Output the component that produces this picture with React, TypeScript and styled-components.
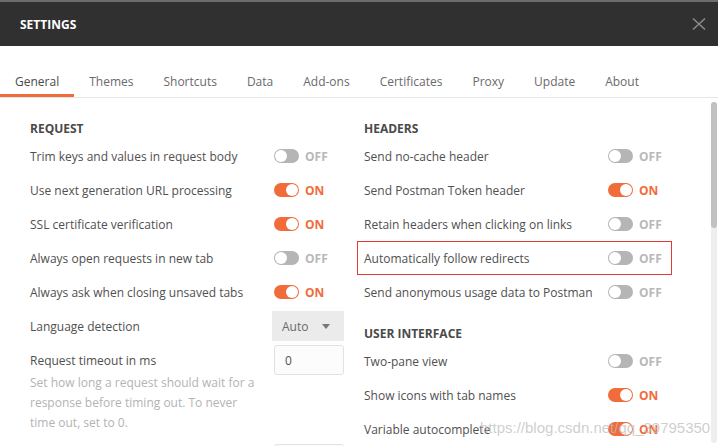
import styled, { createGlobalStyle } from "styled-components";

const GlobalStyle = createGlobalStyle`
  html, body {
    margin: 0;
    padding: 0;
    background: #ffffff;
  }

  body {
    font-family: "Open Sans", "Liberation Sans", sans-serif;
    color: #505050;
  }
`;

const Window = styled.div`
  height: 100vh;
  overflow: hidden;
  position: relative;
  background: #ffffff;
`;

const Header = styled.header`
  height: 44px;
  border-top: 2px solid #6c6c6c;
  background-color: #303030;
  padding: 0 12px 0 20px;
  display: flex;
  align-items: center;
  justify-content: space-between;
`;

const Title = styled.h1`
  margin: 0;
  font-size: 12px;
  font-weight: 700;
  color: #ffffff;
`;

const CloseButton = styled.button`
  display: flex;
  padding: 0;
  border: 0;
  background: none;
  cursor: pointer;
`;

const TabBar = styled.nav`
  display: flex;
  padding-top: 22px;
  border-bottom: 1px solid #e6e6e6;
`;

const Tab = styled.div<{ $active?: boolean }>`
  height: 26px;
  padding: 0 15px;
  display: flex;
  align-items: center;
  font-size: 12px;
  color: ${(p) => (p.$active ? "#4a4a4a" : "#6a6a6a")};
  border-bottom: 3px solid ${(p) => (p.$active ? "#f26b3a" : "transparent")};
`;

const Body = styled.div`
  display: flex;
`;

const Columns = styled.div`
  flex: 1;
  display: flex;
  padding: 19px 0 0 30px;
`;

const Column = styled.section`
  width: 334px;
  display: flex;
  flex-direction: column;
`;

const Heading = styled.h2<{ $spaced?: boolean }>`
  margin: ${(p) => (p.$spaced ? "13px" : "0")} 0 0;
  height: 22px;
  display: flex;
  align-items: center;
  font-size: 12px;
  font-weight: 700;
  color: #4a4a4a;
`;

const Row = styled.div<{ $highlight?: boolean }>`
  box-sizing: border-box;
  height: 34px;
  display: flex;
  align-items: center;
  flex-shrink: 0;
  ${(p) =>
    p.$highlight &&
    `
    width: 315px;
    margin-left: -7px;
    padding-left: 6px;
    border: 1px solid #e53935;
  `}
`;

const Label = styled.span`
  width: 244px;
  font-size: 12px;
  color: #505050;
  white-space: nowrap;
`;

const Switch = styled.span<{ $on: boolean }>`
  position: relative;
  width: 25px;
  height: 14px;
  border-radius: 7px;
  background-color: ${(p) => (p.$on ? "#f26b3a" : "#b5b5b5")};

  &::after {
    content: "";
    position: absolute;
    top: 1px;
    left: ${(p) => (p.$on ? "12px" : "1px")};
    width: 12px;
    height: 12px;
    border-radius: 50%;
    background: #ffffff;
  }
`;

const SwitchText = styled.span<{ $on: boolean }>`
  margin-left: 6px;
  font-size: 12px;
  font-weight: 700;
  color: ${(p) => (p.$on ? "#f26b3a" : "#b8b8b8")};
`;

const Select = styled.div`
  box-sizing: border-box;
  width: 72px;
  height: 30px;
  margin-left: -2px;
  padding: 0 10px;
  display: flex;
  align-items: center;
  justify-content: space-between;
  background-color: #ebebeb;
  font-size: 12px;
  color: #6a6a6a;
`;

const Caret = styled.span`
  width: 0;
  height: 0;
  margin-right: 4px;
  border-left: 4px solid transparent;
  border-right: 4px solid transparent;
  border-top: 5px solid #777777;
`;

const NumberInput = styled.div`
  box-sizing: border-box;
  width: 70px;
  height: 30px;
  padding: 0 10px;
  display: flex;
  align-items: center;
  border: 1px solid #e2e2e2;
  border-radius: 3px;
  background: #fcfcfc;
  font-size: 12px;
  color: #505050;
`;

const Help = styled.p`
  width: 232px;
  margin: -4px 0 9px;
  font-size: 12px;
  line-height: 20px;
  color: #b3b3b3;
`;

const ScrollTrack = styled.div`
  width: 6px;
  height: 341px;
  margin: 4px 1px 0 0;
  border-radius: 3px;
  background: #eeeeee;
`;

const ScrollThumb = styled.div`
  height: 126px;
  border-radius: 3px;
  background: #c1c1c1;
`;

const Watermark = styled.span`
  position: absolute;
  left: 480px;
  top: 419px;
  font-family: "Liberation Sans", Arial, sans-serif;
  font-size: 15px;
  color: rgba(190, 190, 190, 0.75);
  pointer-events: none;
`;

type Toggle = { label: string; on: boolean; highlight?: boolean };

const TABS = [
  "General",
  "Themes",
  "Shortcuts",
  "Data",
  "Add-ons",
  "Certificates",
  "Proxy",
  "Update",
  "About",
];

const REQUEST: Toggle[] = [
  { label: "Trim keys and values in request body", on: false },
  { label: "Use next generation URL processing", on: true },
  { label: "SSL certificate verification", on: true },
  { label: "Always open requests in new tab", on: false },
  { label: "Always ask when closing unsaved tabs", on: true },
];

const HEADERS: Toggle[] = [
  { label: "Send no-cache header", on: false },
  { label: "Send Postman Token header", on: true },
  { label: "Retain headers when clicking on links", on: false },
  { label: "Automatically follow redirects", on: false, highlight: true },
  { label: "Send anonymous usage data to Postman", on: false },
];

const USER_INTERFACE: Toggle[] = [
  { label: "Two-pane view", on: false },
  { label: "Show icons with tab names", on: true },
  { label: "Variable autocomplete", on: true },
];

function ToggleRow({ label, on, highlight }: Toggle) {
  return (
    <Row $highlight={highlight}>
      <Label>{label}</Label>
      <Switch $on={on} />
      <SwitchText $on={on}>{on ? "ON" : "OFF"}</SwitchText>
    </Row>
  );
}

function CloseIcon() {
  return (
    <svg width="14" height="14" viewBox="0 0 14 14" aria-hidden="true">
      <path d="M1 1.5 L13 12.5 M13 1.5 L1 12.5" stroke="#8a8a8a" strokeWidth="1.6" />
    </svg>
  );
}

export default function App() {
  return (
    <Window>
      <GlobalStyle />
      <Header>
        <Title>SETTINGS</Title>
        <CloseButton aria-label="close">
          <CloseIcon />
        </CloseButton>
      </Header>

      <TabBar>
        {TABS.map((tab, i) => (
          <Tab key={tab} $active={i === 0}>
            {tab}
          </Tab>
        ))}
      </TabBar>

      <Body>
        <Columns>
          <Column>
            <Heading>REQUEST</Heading>
            {REQUEST.map((t) => (
              <ToggleRow key={t.label} {...t} />
            ))}
            <Row>
              <Label>Language detection</Label>
              <Select>
                Auto
                <Caret />
              </Select>
            </Row>
            <Row>
              <Label>Request timeout in ms</Label>
              <NumberInput>0</NumberInput>
            </Row>
            <Help>
              Set how long a request should wait for a response before timing
              out. To never time out, set to 0.
            </Help>
            <Row>
              <Label />
              <NumberInput />
            </Row>
          </Column>

          <Column>
            <Heading>HEADERS</Heading>
            {HEADERS.map((t) => (
              <ToggleRow key={t.label} {...t} />
            ))}
            <Heading $spaced>USER INTERFACE</Heading>
            {USER_INTERFACE.map((t) => (
              <ToggleRow key={t.label} {...t} />
            ))}
          </Column>
        </Columns>

        <ScrollTrack>
          <ScrollThumb />
        </ScrollTrack>
      </Body>

      <Watermark>https://blog.csdn.net/qq_39795350</Watermark>
    </Window>
  );
}
